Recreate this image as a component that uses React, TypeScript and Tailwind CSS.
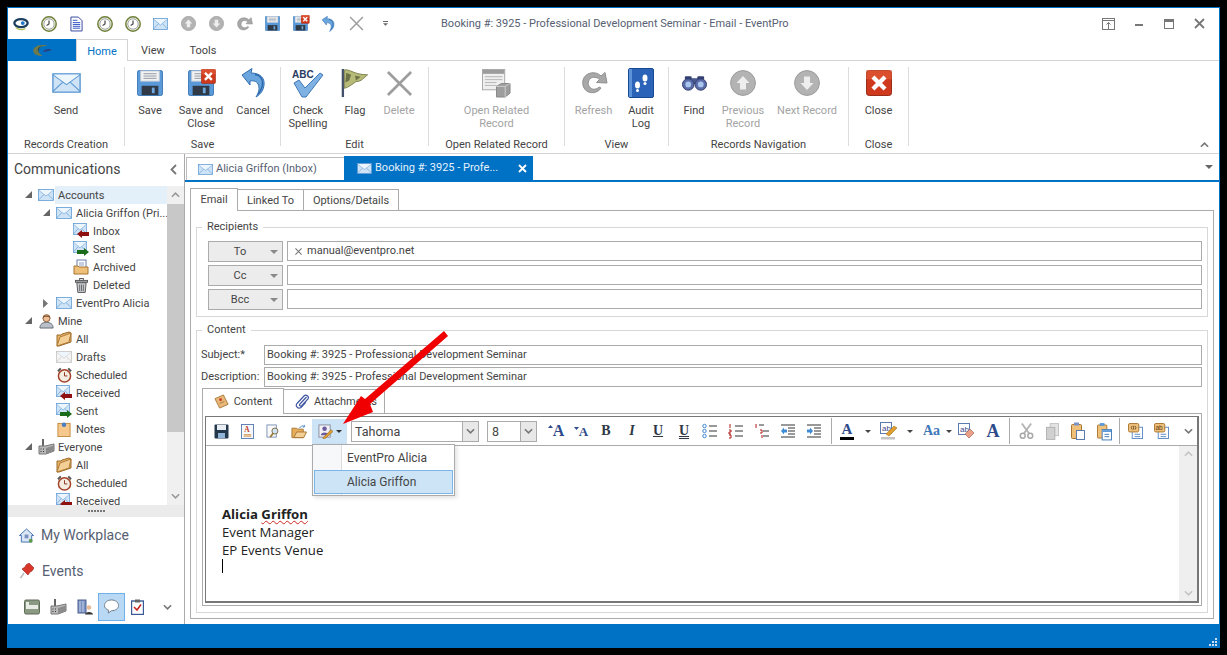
import React from 'react';

type IconProps = { className?: string };
type ColorProps = IconProps & { c?: string };

const Env = ({ className = 'w-[16px] h-[12px]', c = '#5f9bd4', f = '#cfe3f7' }: ColorProps & { f?: string }) => (
  <svg viewBox="0 0 32 24" className={`shrink-0 ${className}`} preserveAspectRatio="none">
    <rect x="1" y="1" width="30" height="22" fill={f} stroke={c} strokeWidth="1.6" />
    <path d="M1 2 L16 14 L31 2 M1 22 L12 11 M31 22 L20 11" fill="none" stroke={c} strokeWidth="1.3" />
    <path d="M2 2 L16 13 L30 2 Z" fill="#eef6fd" />
  </svg>
);

const ClockRing = () => (
  <svg viewBox="0 0 16 16" className="w-[16px] h-[16px]">
    <circle cx="8" cy="8" r="7.2" fill="#f6f6ea" stroke="#6f7f3a" strokeWidth="1.5" />
    <circle cx="8" cy="8" r="5.2" fill="#fff" stroke="#9aa3a0" strokeWidth="1" />
    <path d="M8 4.5 V8 L5.6 9.4" fill="none" stroke="#444" strokeWidth="1.2" />
  </svg>
);

const DocLines = () => (
  <svg viewBox="0 0 14 16" className="w-[13px] h-[16px]">
    <path d="M1 .5 H9 L13 4.5 V15.5 H1 Z" fill="#fff" stroke="#2a3f9a" />
    <path d="M3 4 H8 M3 6.5 H11 M3 8.5 H11 M3 10.5 H11 M3 12.5 H11" stroke="#2a4bc0" />
  </svg>
);

const Floppy = ({ className = 'w-[26px] h-[26px]' }: IconProps) => (
  <svg viewBox="0 0 28 28" className={className}>
    <rect x=".5" y=".5" width="27" height="27" rx="2" fill="#5b9ad8" stroke="#3a76b6" />
    <rect x="4" y="1" width="20" height="11" fill="#f2f2f2" stroke="#c4ccd6" />
    <path d="M7 4 H21 M7 6.5 H21 M7 9 H21" stroke="#8c96a3" />
    <rect x="5" y="17" width="18" height="10" fill="#2f3a46" />
    <rect x="16" y="19" width="3" height="6" fill="#6fa7df" />
  </svg>
);

const RedX = ({ className = 'w-[26px] h-[26px]' }: IconProps) => (
  <svg viewBox="0 0 28 28" className={className}>
    <rect x=".5" y=".5" width="27" height="27" rx="3" fill="#cf3a1e" stroke="#8f1f0d" />
    <path d="M0 0 H28 V10 H0 Z" fill="#e8643f" opacity=".5" />
    <path d="M7.5 7.5 L20.5 20.5 M20.5 7.5 L7.5 20.5" stroke="#fff" strokeWidth="4.6" />
  </svg>
);

const FloppyX = ({ className = 'w-[26px] h-[26px]' }: IconProps) => (
  <span className={`relative inline-block ${className}`}>
    <Floppy className="w-full h-full" />
    <span className="absolute -top-[1px] -right-[2px] w-[57%] h-[57%]">
      <RedX className="w-full h-full" />
    </span>
  </span>
);

const UndoArrow = ({ className = 'w-[24px] h-[30px]' }: IconProps) => (
  <svg viewBox="0 0 24 30" className={className}>
    <path d="M1 7 L11 .5 L10 5 C19 5 24 10 23 17 C22.5 22 20 26 15 29 C18 24 19 20 17 16 C15.5 13 12 12.5 9 13 L9 17 Z" fill="#6aa5dd" stroke="#2f6db0" />
    <path d="M14 6.5 C19 7 22 11 21.5 16 C21 20 19 24 17 26" fill="none" stroke="#2a66ab" strokeWidth="1.4" />
  </svg>
);

const GrayX = ({ className = 'w-[27px] h-[27px]' }: IconProps) => (
  <svg viewBox="0 0 28 28" className={className}>
    <path d="M2 2 L26 26 M26 2 L2 26" stroke="#9d9d9d" strokeWidth="2.8" />
  </svg>
);

const CircArrow = ({ className = 'w-[26px] h-[26px]', down = false }: IconProps & { down?: boolean }) => (
  <svg viewBox="0 0 26 26" className={className}>
    <circle cx="13" cy="13" r="12.4" fill="#b3b3b3" stroke="#9a9a9a" />
    <path d={down ? 'M13 20 L6.5 13 H10 V6.5 H16 V13 H19.5 Z' : 'M13 6 L19.5 13 H16 V19.5 H10 V13 H6.5 Z'} fill="#eeeeee" />
  </svg>
);

const RefreshGray = ({ className = 'w-[28px] h-[26px]' }: IconProps) => (
  <svg viewBox="0 0 28 26" className={className}>
    <path d="M21 18 C18 23 10 24.5 5.5 20 C1 15 2 7 8 4 C13 1.5 18 3 21 6 L25 2.5 L27 13 L16.5 12.5 L19.5 9.5 C17 7 13 6.5 10.5 8.5 C7.5 11 7.5 15.5 10.5 18 C13 20 17 19.5 19 17 Z" fill="#a8a8a8" stroke="#8f8f8f" />
  </svg>
);

const FlagIcon = () => (
  <svg viewBox="0 0 28 32" className="w-[28px] h-[31px]">
    <path d="M1.5 1 V30" stroke="#43506b" strokeWidth="2.4" />
    <path d="M3 2 C9 1 13 7 27 7 C23 10 21 14 15 14 C11 17 7 20 3 21 Z" fill="#b7bb78" stroke="#7f8352" />
    <path d="M5 5 L10 7 L8 13 L4 15 Z M14 8 L20 9 L15 13 Z" fill="#6c7046" />
  </svg>
);

const CheckAbc = () => (
  <svg viewBox="0 0 32 30" className="w-[32px] h-[30px]">
    <text x="0" y="9.5" fontSize="10" fontWeight="700" fontFamily="'Liberation Sans', sans-serif" fill="#2a3a60">ABC</text>
    <path d="M2 15 L7 12 L13 20 L28 5 L31 7 L14 29 L10 29 Z" fill="#7fb1e2" stroke="#3f78b8" />
  </svg>
);

const RelatedIcon = () => (
  <svg viewBox="0 0 30 30" className="w-[29px] h-[29px]">
    <rect x=".5" y=".5" width="23" height="21" fill="#efefef" stroke="#a8a8a8" />
    <rect x="1" y="1" width="22" height="4" fill="#9c9c9c" />
    <path d="M3 8 H21 M3 11 H21 M3 14 H15 M3 17 H15" stroke="#b4b4b4" />
    <path d="M15 18 L20 15 H29 V25 L24 29 H15 Z" fill="#9e9e9e" stroke="#888" />
    <path d="M15 18 H24 V29 M24 18 L29 15" fill="none" stroke="#cfcfcf" />
  </svg>
);

const AuditBook = () => (
  <svg viewBox="0 0 26 30" className="w-[26px] h-[30px]">
    <rect x=".5" y=".5" width="25" height="29" rx="1.5" fill="#2a63b8" stroke="#174a92" />
    <rect x="1" y="1" width="3" height="28" fill="#5d93d8" />
    <ellipse cx="9.5" cy="17" rx="2.5" ry="3.6" fill="#fff" />
    <circle cx="9.5" cy="22.5" r="1.5" fill="#fff" />
    <ellipse cx="17" cy="10" rx="2.5" ry="3.6" fill="#fff" />
    <circle cx="17" cy="15.5" r="1.5" fill="#fff" />
  </svg>
);

const Binoc = () => (
  <svg viewBox="0 0 26 16" className="w-[25px] h-[16px]">
    <rect x="8" y="3" width="10" height="6" fill="#4a5a8e" />
    <circle cx="6.5" cy="9.5" r="6" fill="#5c6ca8" stroke="#333f70" />
    <circle cx="19.5" cy="9.5" r="6" fill="#5c6ca8" stroke="#333f70" />
    <circle cx="6.5" cy="9.5" r="3" fill="#a8c6ee" />
    <circle cx="19.5" cy="9.5" r="3" fill="#a8c6ee" />
    <rect x="3" y="1" width="7" height="3" rx="1" fill="#333f70" />
    <rect x="16" y="1" width="7" height="3" rx="1" fill="#333f70" />
  </svg>
);

const EnvArrow = ({ green = false }: { green?: boolean }) => (
  <span className="relative inline-block w-[16px] h-[16px]">
    <Env className="w-[14px] h-[12px] absolute left-0 top-0" />
    <svg viewBox="0 0 12 8" className="w-[12px] h-[8px] absolute left-[4px] top-[7px]">
      <path
        d={green ? 'M0 2 H7 V0 L12 4 L7 8 V6 H0 Z' : 'M12 2 H5 V0 L0 4 L5 8 V6 H12 Z'}
        fill={green ? '#1a6b1a' : '#8e1010'}
      />
    </svg>
  </span>
);

const FolderIcon = () => (
  <svg viewBox="0 0 16 16" className="w-[16px] h-[16px]">
    <path d="M1 15 L1 4 H5 L6 3 L13 1 L15 2 V11 L3 15 Z" fill="#e6b266" stroke="#9a6a2a" />
    <path d="M1 15 L4 6 L15 2 L13 11 Z" fill="#f3cf95" stroke="#b07c36" />
  </svg>
);

const ArchiveIcon = () => (
  <svg viewBox="0 0 16 16" className="w-[16px] h-[16px]">
    <rect x="4" y="1" width="9" height="9" fill="#fff" stroke="#6a7fb0" />
    <path d="M6 4 H11 M6 6 H11" stroke="#8aa0c8" />
    <path d="M1 15 V7 H5 L6 8 H15 V15 Z" fill="#eec07a" stroke="#a57632" />
  </svg>
);

const TrashIcon = () => (
  <svg viewBox="0 0 14 16" className="w-[13px] h-[15px]">
    <rect x="5" y=".5" width="4" height="2" fill="none" stroke="#555" />
    <rect x=".5" y="2.5" width="13" height="2" fill="#a9afb8" stroke="#555" />
    <path d="M2 5 H12 L11 15.5 H3 Z" fill="#c6cbd2" stroke="#555" />
    <path d="M5 7 V14 M7 7 V14 M9 7 V14" stroke="#666" />
  </svg>
);

const PersonIcon = () => (
  <svg viewBox="0 0 16 16" className="w-[15px] h-[16px]">
    <path d="M1 15.5 C1 11 4 9.5 8 9.5 C12 9.5 15 11 15 15.5 Z" fill="#b9c0ca" stroke="#5e6670" />
    <circle cx="8" cy="5" r="3.8" fill="#eec19a" stroke="#8a5a32" />
    <path d="M4.2 5 C4 1 12 1 11.8 5 C10 3 6 3 4.2 5 Z" fill="#7a4a22" />
  </svg>
);

const FactoryIcon = ({ className = 'w-[17px] h-[16px]' }: IconProps) => (
  <svg viewBox="0 0 17 16" className={className}>
    <rect x="4" y="0" width="2" height="7" fill="#666" />
    <path d="M1 7 H7 L16 5 V12 L8 15 H1 Z" fill="#b9b9b9" stroke="#777" />
    <path d="M8 9 L16 6.5 V12 L8 15 Z" fill="#8b8b8b" />
    <path d="M2.5 10 H3.5 M5 10 H6 M2.5 12.5 H3.5 M5 12.5 H6" stroke="#333" />
  </svg>
);

const AlarmIcon = () => (
  <svg viewBox="0 0 16 16" className="w-[15px] h-[16px]">
    <path d="M1 4 L4 1 M15 4 L12 1" stroke="#555" strokeWidth="2" />
    <circle cx="8" cy="9" r="6.5" fill="#f4ece0" stroke="#a4422a" strokeWidth="1.6" />
    <path d="M8 5 V9 H11" fill="none" stroke="#8a2f1c" />
  </svg>
);

const NoteIcon = () => (
  <svg viewBox="0 0 14 16" className="w-[14px] h-[15px]">
    <rect x=".5" y="1.5" width="13" height="14" fill="#f6c88b" stroke="#c18a42" />
    <circle cx="7" cy="3" r="2.4" fill="#4b7fc4" />
  </svg>
);

type TreeRowProps = {
  level: number;
  icon: React.ReactNode;
  label: string;
  caret?: 'open' | 'closed';
  active?: boolean;
};

const TreeRow = ({ level, icon, label, caret, active }: TreeRowProps) => {
  const padding = level === 0 ? 'pl-[29px]' : level === 1 ? 'pl-[47px]' : 'pl-[64px]';
  return (
    <div className={`flex items-center h-[18px] shrink-0 ${padding}`}>
      <span className="w-[18px] h-[18px] relative shrink-0 flex items-center justify-center">
        <span className="absolute left-[-12px] top-[5px]">
          {caret === 'open' && (
            <svg viewBox="0 0 7 7" className="w-[7px] h-[7px]"><path d="M7 0 V7 H0 Z" fill="#666" /></svg>
          )}
          {caret === 'closed' && (
            <svg viewBox="0 0 5 9" className="w-[5px] h-[9px]"><path d="M0 0 L5 4.5 L0 9 Z" fill="#777" /></svg>
          )}
        </span>
        {icon}
      </span>
      <span className={`pl-[3px] h-[18px] leading-[20px] flex-1 whitespace-nowrap overflow-hidden text-[#444] ${active ? 'bg-[#e3eff9]' : ''}`}>
        {label}
      </span>
    </div>
  );
};

type RibbonBtnProps = { width: string; icon: React.ReactNode; lines: string[]; off?: boolean };

const RibbonBtn = ({ width, icon, lines, off }: RibbonBtnProps) => (
  <div className={`flex flex-col items-center shrink-0 ${width}`}>
    <div className="h-[32px] flex items-center justify-center">{icon}</div>
    <div className={`mt-[5px] text-center leading-[13px] whitespace-nowrap ${off ? 'text-[#a3a3a3]' : 'text-[#444]'}`}>
      {lines.map((l) => (
        <div key={l}>{l}</div>
      ))}
    </div>
  </div>
);

type RibbonGroupProps = { width: string; pad?: string; label: string; children: React.ReactNode };

const RibbonGroup = ({ width, pad = 'justify-center', label, children }: RibbonGroupProps) => (
  <div className={`shrink-0 flex flex-col h-[79px] mt-[6px] border-r border-[#dcdcdc] ${width}`}>
    <div className={`flex flex-1 ${pad}`}>{children}</div>
    <div className="h-[13px] leading-[13px] mb-[-5px] text-center text-[#444] whitespace-nowrap">{label}</div>
  </div>
);

const RecipientRow = ({ label, value }: { label: string; value?: string }) => (
  <div className="flex h-[21px] gap-[4px]">
    <div className="w-[75px] h-[21px] border border-[#ababab] bg-[#ececec] flex items-center relative text-[#444]">
      <span className="w-[62px] text-center pt-[2px]">{label}</span>
      <svg viewBox="0 0 8 4" className="w-[8px] h-[4px] absolute right-[4px] top-[8px]"><path d="M0 0 H8 L4 4 Z" fill="#8a8a8a" /></svg>
    </div>
    <div className="flex-1 h-[20px] border border-[#ababab] bg-white flex items-center pl-[7px] text-[#444]">
      {value && (
        <>
          <svg viewBox="0 0 8 8" className="w-[7px] h-[7px] mr-[5px]"><path d="M.5 .5 L7.5 7.5 M7.5 .5 L.5 7.5" stroke="#777" strokeWidth="1.2" /></svg>
          <span className="pt-[1px]">{value}</span>
        </>
      )}
    </div>
  </div>
);

const FieldRow = ({ label, value }: { label: string; value: string }) => (
  <div className="flex items-center h-[20px]">
    <span className="w-[63px] text-[#444] shrink-0 whitespace-nowrap">{label}</span>
    <div className="flex-1 h-[20px] border border-[#ababab] leading-[18px] pl-[2px] text-[#444] whitespace-nowrap">{value}</div>
  </div>
);

const Tool = ({ w = 'w-[26px]', children }: { w?: string; children: React.ReactNode }) => (
  <div className={`${w} h-[24px] flex items-center justify-center shrink-0`}>{children}</div>
);

const Caret = ({ w = 'w-[16px]' }: { w?: string }) => (
  <Tool w={w}>
    <svg viewBox="0 0 6 3" className="w-[6px] h-[3px]"><path d="M0 0 H6 L3 3 Z" fill="#444" /></svg>
  </Tool>
);

const Sep = () => <div className="w-[1px] h-[26px] bg-[#ababab] shrink-0" />;

const Serif = ({ children, className = '' }: { children: React.ReactNode; className?: string }) => (
  <span className={`font-['Liberation_Serif',serif] font-bold leading-none ${className}`}>{children}</span>
);

const GrowA = ({ small = false }: { small?: boolean }) => (
  <span className="flex items-start">
    <svg viewBox="0 0 5 3" className={`w-[5px] h-[3px] mt-[2px] ${small ? 'rotate-180' : ''}`}><path d="M0 3 L2.5 0 L5 3 Z" fill="#2e4a8a" /></svg>
    <Serif className={`${small ? 'text-[13px]' : 'text-[16px]'} text-[#2e4a8a]`}>A</Serif>
  </span>
);

const ListIcon = ({ color, kind }: { color: string; kind: 'dot' | 'num' | 'multi' }) => (
  <svg viewBox="0 0 16 16" className="w-[16px] h-[16px]">
    {kind === 'dot' && (
      <>
        <circle cx="2.5" cy="3" r="1.7" fill="none" stroke={color} />
        <circle cx="2.5" cy="8" r="1.7" fill="none" stroke={color} />
        <circle cx="2.5" cy="13" r="1.7" fill="none" stroke={color} />
      </>
    )}
    {kind === 'num' && <path d="M2 1 V5 M1 7 H3 V9 H1 V11 H3 M1 12 H3 V15 H1" fill="none" stroke={color} />}
    {kind === 'multi' && <path d="M2 1 V5 M6 7 H8 V10 H6 M8 12 V15" fill="none" stroke={color} />}
    <path
      d={kind === 'multi' ? 'M5 2 H10 M9 8 H15 M9 13 H15' : 'M7 3 H15 M7 8 H15 M7 13 H15'}
      stroke="#333"
    />
  </svg>
);

const IndentIcon = ({ right = false }: { right?: boolean }) => (
  <svg viewBox="0 0 16 14" className="w-[16px] h-[14px]">
    <path d="M1 1 H15 M8 4 H15 M8 7 H15 M8 10 H15 M1 13 H15" stroke="#333" />
    <path d={right ? 'M1 5.5 H4 V3.5 L7 7 L4 10.5 V8.5 H1 Z' : 'M7 5.5 H4 V3.5 L1 7 L4 10.5 V8.5 H7 Z'} fill="#3f8ad6" />
  </svg>
);

const ScrollArrow = ({ down = false, c = '#999' }: { down?: boolean; c?: string }) => (
  <svg viewBox="0 0 10 6" className="w-[9px] h-[6px]">
    <path d={down ? 'M1 1 L5 5 L9 1' : 'M1 5 L5 1 L9 5'} fill="none" stroke={c} strokeWidth="1.8" />
  </svg>
);

export default function App() {
  return (
    <div className="w-[1227px] h-[655px] bg-black pt-[7px] pl-[7px] font-['Roboto',sans-serif] text-[11px] relative overflow-hidden">
      <div className="w-[1213px] h-[641px] bg-white border-t border-x border-[#0072c6] flex flex-col">
        {/* title bar */}
        <div className="h-[31px] flex items-center shrink-0">
          <div className="flex items-center w-[392px] shrink-0">
            <div className="w-[27px] flex justify-center">
              <svg viewBox="0 0 18 14" className="w-[16px] h-[14px]">
                <ellipse cx="9" cy="6" rx="7.5" ry="4.5" fill="none" stroke="#1c3f5f" strokeWidth="2.6" />
                <circle cx="11" cy="6" r="2.2" fill="#1f78c8" />
                <path d="M3 11 C6 14 11 14 14 12" fill="none" stroke="#b3bd56" strokeWidth="1.4" />
              </svg>
            </div>
            <div className="w-[28px] flex justify-center"><ClockRing /></div>
            <div className="w-[28px] flex justify-center"><DocLines /></div>
            <div className="w-[28px] flex justify-center"><ClockRing /></div>
            <div className="w-[28px] flex justify-center"><ClockRing /></div>
            <div className="w-[28px] flex justify-center"><Env className="w-[15px] h-[12px]" /></div>
            <div className="w-[28px] flex justify-center"><CircArrow className="w-[15px] h-[15px]" /></div>
            <div className="w-[28px] flex justify-center"><CircArrow className="w-[15px] h-[15px]" down /></div>
            <div className="w-[28px] flex justify-center"><RefreshGray className="w-[17px] h-[16px]" /></div>
            <div className="w-[28px] flex justify-center"><Floppy className="w-[15px] h-[15px]" /></div>
            <div className="w-[28px] flex justify-center"><FloppyX className="w-[15px] h-[15px]" /></div>
            <div className="w-[28px] flex justify-center"><UndoArrow className="w-[14px] h-[16px]" /></div>
            <div className="w-[28px] flex justify-center"><GrayX className="w-[15px] h-[15px]" /></div>
            <div className="w-[28px] flex flex-col items-center ml-[2px]">
              <div className="w-[5px] h-[1px] bg-[#666] mb-[1px]" />
              <svg viewBox="0 0 6 3" className="w-[5px] h-[3px]"><path d="M0 0 H6 L3 3 Z" fill="#666" /></svg>
            </div>
          </div>
          <div className="ml-[41px] flex-1 pt-[2px] text-[#566072] whitespace-nowrap">Booking #: 3925 - Professional Development Seminar - Email - EventPro</div>
          <div className="flex items-center pr-[5px]">
            <div className="w-[30px] flex justify-center">
              <svg viewBox="0 0 13 12" className="w-[13px] h-[12px]">
                <rect x=".5" y=".5" width="12" height="11" fill="none" stroke="#777" />
                <path d="M0 2.5 H13 M6.5 11 V4.5 M4.5 6.5 L6.5 4.5 L8.5 6.5" fill="none" stroke="#777" />
              </svg>
            </div>
            <div className="w-[31px] flex justify-center pt-[2px]"><div className="w-[8px] h-[2px] bg-[#777]" /></div>
            <div className="w-[30px] flex justify-center">
              <div className="w-[10px] h-[10px] border border-[#777] border-t-[3px]" />
            </div>
            <div className="w-[30px] flex justify-center">
              <svg viewBox="0 0 11 11" className="w-[11px] h-[11px]"><path d="M1 1 L10 10 M10 1 L1 10" stroke="#777" strokeWidth="1.8" /></svg>
            </div>
          </div>
        </div>

        {/* ribbon tabs */}
        <div className="h-[22px] flex shrink-0 border-b border-[#d4d4d4] text-[#444]">
          <div className="w-[68px] h-[22px] bg-[#0072c6] flex items-center justify-center">
            <svg viewBox="0 0 22 14" className="w-[21px] h-[13px]">
              <path d="M11 1 C5 1 1 4 1 7 C1 11 6 13 11 13 C8 11 6 9 7 6 C8 3 12 2 17 2 C15 1 13 1 11 1 Z" fill="#6f7a4a" />
              <path d="M11 8 C14 9 18 8 21 6 C20 5 17 5 14 6 Z" fill="#2b3f7f" />
              <path d="M11 2 C8 3 6 6 7 9 C5 7 6 3 11 2 Z" fill="#1c2f4a" />
            </svg>
          </div>
          <div className="w-[52px] h-[22px] bg-white border-x border-t border-[#d4d4d4] text-[#0072c6] text-center leading-[23px]">Home</div>
          <div className="w-[50px] text-center leading-[24px]">View</div>
          <div className="w-[50px] text-center leading-[24px]">Tools</div>
        </div>

        {/* ribbon */}
        <div className="h-[93px] flex shrink-0 border-b border-[#d4d4d4] relative">
          <RibbonGroup width="w-[117px]" label="Records Creation">
            <RibbonBtn width="w-[60px]" icon={<Env className="w-[29px] h-[20px]" />} lines={['Send']} />
          </RibbonGroup>
          <RibbonGroup width="w-[156px]" pad="pl-[5px]" label="Save">
            <RibbonBtn width="w-[40px]" icon={<Floppy />} lines={['Save']} />
            <RibbonBtn width="w-[62px]" icon={<FloppyX />} lines={['Save and', 'Close']} />
            <RibbonBtn width="w-[42px]" icon={<UndoArrow />} lines={['Cancel']} />
          </RibbonGroup>
          <RibbonGroup width="w-[148px]" pad="pl-[3px]" label="Edit">
            <RibbonBtn width="w-[48px]" icon={<CheckAbc />} lines={['Check', 'Spelling']} />
            <RibbonBtn width="w-[46px]" icon={<FlagIcon />} lines={['Flag']} />
            <RibbonBtn width="w-[42px]" icon={<GrayX />} lines={['Delete']} off />
          </RibbonGroup>
          <RibbonGroup width="w-[136px]" label="Open Related Record">
            <RibbonBtn width="w-[90px]" icon={<RelatedIcon />} lines={['Open Related', 'Record']} off />
          </RibbonGroup>
          <RibbonGroup width="w-[104px]" pad="pl-[8px]" label="View">
            <RibbonBtn width="w-[41px]" icon={<RefreshGray />} lines={['Refresh']} off />
            <RibbonBtn width="w-[54px]" icon={<AuditBook />} lines={['Audit', 'Log']} />
          </RibbonGroup>
          <RibbonGroup width="w-[180px]" pad="pl-[7px]" label="Records Navigation">
            <RibbonBtn width="w-[36px]" icon={<Binoc />} lines={['Find']} />
            <RibbonBtn width="w-[62px]" icon={<CircArrow />} lines={['Previous', 'Record']} off />
            <RibbonBtn width="w-[66px]" icon={<CircArrow down />} lines={['Next Record']} off />
          </RibbonGroup>
          <RibbonGroup width="w-[60px]" label="Close">
            <RibbonBtn width="w-[50px]" icon={<RedX />} lines={['Close']} />
          </RibbonGroup>
          <div className="absolute right-[10px] bottom-[5px]"><ScrollArrow c="#777" /></div>
        </div>

        {/* body */}
        <div className="flex flex-1 min-h-0">
          {/* sidebar */}
          <div className="w-[177px] shrink-0 border-r border-[#ababab] flex flex-col">
            <div className="h-[32px] shrink-0 flex items-center justify-between pl-[6px] pr-[7px] pb-[2px]">
              <span className="text-[14px] text-[#444]">Communications</span>
              <svg viewBox="0 0 7 11" className="w-[7px] h-[11px]"><path d="M6 1 L1.5 5.5 L6 10" fill="none" stroke="#777" strokeWidth="1.8" /></svg>
            </div>
            <div className="h-[319px] flex shrink-0 overflow-hidden">
              <div className="w-[159px] flex flex-col overflow-hidden">
                <TreeRow level={0} caret="open" icon={<Env />} label="Accounts" active />
                <TreeRow level={1} caret="open" icon={<Env />} label="Alicia Griffon (Pri..." />
                <TreeRow level={2} icon={<EnvArrow />} label="Inbox" />
                <TreeRow level={2} icon={<EnvArrow green />} label="Sent" />
                <TreeRow level={2} icon={<ArchiveIcon />} label="Archived" />
                <TreeRow level={2} icon={<TrashIcon />} label="Deleted" />
                <TreeRow level={1} caret="closed" icon={<Env />} label="EventPro Alicia" />
                <TreeRow level={0} caret="open" icon={<PersonIcon />} label="Mine" />
                <TreeRow level={1} icon={<FolderIcon />} label="All" />
                <TreeRow level={1} icon={<Env c="#c4c4c4" f="#f4f4f4" />} label="Drafts" />
                <TreeRow level={1} icon={<AlarmIcon />} label="Scheduled" />
                <TreeRow level={1} icon={<EnvArrow />} label="Received" />
                <TreeRow level={1} icon={<EnvArrow green />} label="Sent" />
                <TreeRow level={1} icon={<NoteIcon />} label="Notes" />
                <TreeRow level={0} caret="open" icon={<FactoryIcon />} label="Everyone" />
                <TreeRow level={1} icon={<FolderIcon />} label="All" />
                <TreeRow level={1} icon={<AlarmIcon />} label="Scheduled" />
                <TreeRow level={1} icon={<EnvArrow />} label="Received" />
              </div>
              <div className="w-[17px] bg-[#f0f0f0] flex flex-col">
                <div className="h-[18px] flex items-center justify-center shrink-0"><ScrollArrow /></div>
                <div className="h-[228px] bg-[#c8c8c8] shrink-0" />
                <div className="flex-1" />
                <div className="h-[18px] flex items-center justify-center shrink-0"><ScrollArrow down /></div>
              </div>
            </div>
            <div className="h-[12px] shrink-0 bg-[#ebebeb] flex items-center justify-center gap-[1px]">
              {[0, 1, 2, 3, 4, 5].map((i) => (
                <div key={i} className="w-[2px] h-[2px] bg-[#777]" />
              ))}
            </div>
            <div className="h-[36px] shrink-0 flex items-center pl-[11px] gap-[7px] text-[14px] text-[#566072]">
              <svg viewBox="0 0 16 16" className="w-[15px] h-[15px]">
                <path d="M8 1 L15.5 8 H13.5 V15 H2.5 V8 H.5 Z" fill="#d9e6f6" stroke="#3f6cae" />
                <rect x="6" y="7" width="4" height="4" fill="#7a8ec0" />
                <circle cx="12.5" cy="13.5" r="2" fill="#5a9a4a" />
              </svg>
              My Workplace
            </div>
            <div className="h-[36px] shrink-0 flex items-center pl-[12px] gap-[8px] text-[14px] text-[#566072]">
              <svg viewBox="0 0 14 16" className="w-[14px] h-[16px]">
                <path d="M6 2 L9 0 L14 5 L12 8 L10 9 L8 12 L2 6 L5 4 Z" fill="#d8362a" stroke="#9c1e16" strokeWidth=".6" />
                <path d="M4 10 L.5 15" stroke="#b9b9b9" strokeWidth="1.5" />
              </svg>
              Events
            </div>
            <div className="flex items-center pl-[11px] h-[35px] shrink-0">
              <div className="w-[28px] flex justify-center">
                <svg viewBox="0 0 16 16" className="w-[16px] h-[16px]">
                  <rect x=".5" y="1" width="15" height="14" rx="1.5" fill="#8a9a82" stroke="#5e6b58" />
                  <rect x="2" y="6" width="12" height="4" fill="#e9ece6" />
                  <rect x="2" y="3" width="3" height="3" fill="#e9ece6" />
                </svg>
              </div>
              <div className="w-[28px] flex justify-center"><FactoryIcon /></div>
              <div className="w-[28px] flex justify-center">
                <svg viewBox="0 0 16 16" className="w-[16px] h-[16px]">
                  <rect x="1" y="1" width="8" height="13" fill="#7d93c4" stroke="#4d5f90" />
                  <path d="M3 2 V13 M6 2 V13" stroke="#c3cde6" />
                  <circle cx="12" cy="8.5" r="2.2" fill="#e6b894" />
                  <path d="M8 15.5 C8 12 16 12 16 15.5 Z" fill="#333" />
                </svg>
              </div>
              <div className="w-[28px] h-[28px] bg-[#b9d8f4] border border-[#6fb0ea] flex justify-center items-center">
                <svg viewBox="0 0 17 16" className="w-[17px] h-[15px]">
                  <path d="M8.5 1 C13 1 16 4 16 7 C16 10 13 12.5 8.5 12.5 L5 15 L5.5 12 C3 11 1 9.5 1 7 C1 4 4 1 8.5 1 Z" fill="#fff" stroke="#6d7886" />
                </svg>
              </div>
              <div className="w-[28px] flex justify-center">
                <svg viewBox="0 0 13 16" className="w-[13px] h-[16px]">
                  <rect x=".5" y="2" width="12" height="13.5" fill="#fff" stroke="#3a5a96" strokeWidth="1.4" />
                  <rect x="4" y=".5" width="5" height="3" fill="#666" />
                  <path d="M3 8 L6 11 L10 5.5" fill="none" stroke="#c8281e" strokeWidth="1.6" />
                </svg>
              </div>
              <div className="w-[35px] flex justify-center"><ScrollArrow down c="#777" /></div>
            </div>
          </div>

          {/* main */}
          <div className="flex-1 min-w-0 flex flex-col">
            <div className="h-[26px] shrink-0 flex items-end pl-[1px] relative">
              <div className="w-[158px] h-[23px] border-t border-l border-[#bdbdbd] flex items-center pl-[11px] gap-[3px] text-[#566072]">
                <Env className="w-[15px] h-[11px]" />
                Alicia Griffon (Inbox)
              </div>
              <div className="w-[189px] h-[24px] bg-[#0072c6] flex items-center pl-[13px] gap-[3px] text-[#e6f0fa] whitespace-nowrap">
                <Env className="w-[15px] h-[11px]" />
                Booking #: 3925 - Profe...
                <svg viewBox="0 0 9 9" className="w-[9px] h-[9px] ml-[17px] shrink-0"><path d="M1 1 L8 8 M8 1 L1 8" stroke="#fff" strokeWidth="1.8" /></svg>
              </div>
              <svg viewBox="0 0 8 4" className="w-[8px] h-[4px] absolute right-[6px] top-[11px]"><path d="M0 0 H8 L4 4 Z" fill="#666" /></svg>
            </div>
            <div className="h-[2px] bg-[#0072c6] shrink-0" />

            <div className="flex-1 min-h-0 pl-[5px] pr-[5px] pt-[5px] flex flex-col">
              <div className="flex items-end h-[23px] shrink-0 text-[#444]">
                <div className="w-[48px] h-[23px] border-x border-t border-[#ababab] bg-white text-center leading-[21px] relative top-[1px] z-10">Email</div>
                <div className="w-[66px] h-[21px] border-t border-r border-[#ababab] text-center leading-[21px]">Linked To</div>
                <div className="w-[95px] h-[21px] border-t border-r border-[#ababab] text-center leading-[21px]">Options/Details</div>
              </div>
              <div className="border border-[#ababab] h-[409px] shrink-0 px-[5px] pt-[8px] text-[#444]">
                <fieldset className="border border-[#d8d8d8] h-[98px] pl-[11px] pr-[5px] min-w-0">
                  <legend className="ml-[-6px] px-[5px] leading-[16px]">Recipients</legend>
                  <div className="pt-[6px] flex flex-col gap-[3px]">
                    <RecipientRow label="To" value="manual@eventpro.net" />
                    <RecipientRow label="Cc" />
                    <RecipientRow label="Bcc" />
                  </div>
                </fieldset>
                <fieldset className="mt-[6px] border border-[#d8d8d8] h-[290px] pl-[4px] pr-[5px] min-w-0">
                  <legend className="ml-[1px] px-[5px] leading-[14px]">Content</legend>
                  <div className="pt-[8px] flex flex-col gap-[2px]">
                    <FieldRow label="Subject:*" value="Booking #: 3925 - Professional Development Seminar" />
                    <FieldRow label="Description:" value="Booking #: 3925 - Professional Development Seminar" />
                  </div>
                  <div className="flex items-end h-[26px] pl-[1px]">
                    <div className="w-[82px] h-[26px] border-x border-t border-[#ababab] bg-white flex items-center justify-center gap-[5px] relative top-[1px] z-10">
                      <svg viewBox="0 0 16 16" className="w-[15px] h-[15px]">
                        <path d="M1 5 L10 1 L15 11 L6 15 Z" fill="#e8b878" stroke="#a87a3c" />
                        <circle cx="7" cy="6" r="1.5" fill="#c8382a" />
                        <path d="M6 10 L11 8" stroke="#a87a3c" />
                      </svg>
                      <span className="pt-[1px]">Content</span>
                    </div>
                    <div className="w-[101px] h-[24px] border-t border-r border-[#ababab] flex items-center pl-[11px] gap-[5px] whitespace-nowrap">
                      <svg viewBox="0 0 14 15" className="w-[14px] h-[15px]">
                        <path d="M11.5 3 L5 10 C3.5 11.5 5.5 13 7 11.5 L13 5 C14.5 2.5 11 0 9 2 L2 9.5 C0 12 3 15.5 6 13.5 L11 8" fill="none" stroke="#3f56a0" strokeWidth="1.2" />
                      </svg>
                      <span className="pt-[1px]">Attachments</span>
                    </div>
                  </div>
                  <div className="border border-[#ababab] h-[193px] p-[2px] ml-[1px]">
                    <div className="h-full border-2 border-t border-l border-[#777] flex flex-col">
                      {/* editor toolbar */}
                      <div className="h-[29px] shrink-0 border-b border-[#ababab] flex items-center pl-[2px] overflow-hidden">
                        <Tool>
                          <svg viewBox="0 0 15 15" className="w-[15px] h-[15px]">
                            <rect x=".5" y=".5" width="14" height="14" rx="1" fill="#24384c" />
                            <rect x="3" y="1" width="9" height="5" fill="#e8eef4" />
                            <rect x="4" y="9" width="7" height="5" fill="#8fb4d8" />
                          </svg>
                        </Tool>
                        <Tool>
                          <svg viewBox="0 0 14 16" className="w-[13px] h-[15px]">
                            <rect x=".5" y=".5" width="13" height="15" fill="#f4f7fc" stroke="#5a7ab0" />
                            <text x="3.5" y="9" fontSize="8" fontWeight="700" fill="#c23a1c" fontFamily="'Liberation Serif', serif">A</text>
                            <path d="M3 11.5 H11 M3 13 H11" stroke="#d08a3a" />
                          </svg>
                        </Tool>
                        <Tool>
                          <svg viewBox="0 0 16 16" className="w-[15px] h-[15px]">
                            <rect x="1" y="1" width="10" height="13" fill="#fafafa" stroke="#7d92b8" />
                            <circle cx="9.5" cy="7.5" r="3.2" fill="#cfe3f7" stroke="#7a6a3a" />
                            <path d="M7.5 10 L4.5 14" stroke="#9a7a3a" strokeWidth="1.8" />
                          </svg>
                        </Tool>
                        <Tool>
                          <svg viewBox="0 0 17 15" className="w-[16px] h-[15px]">
                            <path d="M1 14 V4 H6 L7 5 H13 V14 Z" fill="#e6ad5c" stroke="#a87430" />
                            <path d="M3 14 L6 8 H16.5 L13.5 14 Z" fill="#f3cf95" stroke="#a87430" />
                            <path d="M9 4 C10 2 12 1 14 2 M14 .5 L14.5 2.5 L12.5 3" fill="none" stroke="#4a86c8" />
                          </svg>
                        </Tool>
                        <div className="w-[35px] h-[25px] bg-[#cde4f7] flex items-center justify-center gap-[3px] shrink-0">
                          <svg viewBox="0 0 16 16" className="w-[15px] h-[15px]">
                            <rect x="1" y="1" width="12" height="13" fill="#f2f2f4" stroke="#8a8aa0" />
                            <circle cx="7" cy="5" r="2.4" fill="#6a5aa0" />
                            <path d="M3 12 C3 8 11 8 11 12 Z" fill="#6a5aa0" />
                            <path d="M5 15 L14 6 L16 8 L7 16 Z" fill="#e0a030" stroke="#8a5a18" strokeWidth=".6" />
                          </svg>
                          <svg viewBox="0 0 6 3" className="w-[6px] h-[3px]"><path d="M0 0 H6 L3 3 Z" fill="#333" /></svg>
                        </div>
                        <div className="ml-[4px] w-[128px] h-[21px] border border-[#ababab] flex shrink-0">
                          <span className="flex-1 pl-[3px] leading-[19px] text-[12.5px] text-[#444]">Tahoma</span>
                          <span className="w-[16px] bg-[#e8e8e8] border-l border-[#ababab] flex items-center justify-center"><ScrollArrow down c="#777" /></span>
                        </div>
                        <div className="ml-[8px] w-[50px] h-[21px] border border-[#ababab] flex shrink-0">
                          <span className="flex-1 pl-[4px] leading-[19px] text-[12.5px] text-[#444]">8</span>
                          <span className="w-[16px] bg-[#e8e8e8] border-l border-[#ababab] flex items-center justify-center"><ScrollArrow down c="#777" /></span>
                        </div>
                        <div className="w-[6px] shrink-0" />
                        <Tool><GrowA /></Tool>
                        <Tool w="w-[24px]"><GrowA small /></Tool>
                        <Tool><Serif className="text-[14px] text-[#2e3846]">B</Serif></Tool>
                        <Tool><Serif className="text-[14px] text-[#2e3846] italic">I</Serif></Tool>
                        <Tool><Serif className="text-[14px] text-[#2e3846] underline">U</Serif></Tool>
                        <Tool><Serif className="text-[14px] text-[#2e3846] underline decoration-double">U</Serif></Tool>
                        <Tool><ListIcon color="#3f8ad6" kind="dot" /></Tool>
                        <Tool><ListIcon color="#b01818" kind="num" /></Tool>
                        <Tool><ListIcon color="#b01818" kind="multi" /></Tool>
                        <Tool><IndentIcon /></Tool>
                        <Tool><IndentIcon right /></Tool>
                        <div className="w-[4px] shrink-0" />
                        <Sep />
                        <div className="w-[2px] shrink-0" />
                        <Tool>
                          <div className="flex flex-col items-center">
                            <Serif className="text-[15px] text-[#2e4a8a]">A</Serif>
                            <div className="w-[14px] h-[3px] bg-black" />
                          </div>
                        </Tool>
                        <Caret />
                        <Tool>
                          <svg viewBox="0 0 18 18" className="w-[18px] h-[18px]">
                            <rect x=".5" y=".5" width="11" height="11" fill="#fff" stroke="#5a7ab0" />
                            <text x="2" y="9" fontSize="8" fill="#3a4a8a" fontFamily="'Liberation Sans', sans-serif">ab</text>
                            <path d="M6 12 L14 4 L17 6 L9 14 Z" fill="#e0a030" stroke="#a8701c" strokeWidth=".6" />
                            <rect x="1" y="15" width="14" height="2.5" fill="#c4c4c4" />
                          </svg>
                        </Tool>
                        <Caret />
                        <Tool w="w-[27px]"><Serif className="text-[14px] text-[#3f78b8] whitespace-nowrap">Aa</Serif></Tool>
                        <Caret w="w-[8px]" />
                        <Tool w="w-[27px]">
                          <svg viewBox="0 0 17 17" className="w-[17px] h-[17px]">
                            <rect x=".5" y=".5" width="11" height="11" fill="#fff" stroke="#5a7ab0" />
                            <text x="2" y="9" fontSize="8" fill="#3a4a8a" fontFamily="'Liberation Sans', sans-serif">ab</text>
                            <path d="M7 11 L12 6 L16 10 L11 15 Z" fill="#e8a088" stroke="#a8584a" strokeWidth=".6" />
                          </svg>
                        </Tool>
                        <Tool><Serif className="text-[18px] text-[#2e4a8a]">A</Serif></Tool>
                        <div className="w-[3px] shrink-0" />
                        <Sep />
                        <div className="w-[3px] shrink-0" />
                        <Tool>
                          <svg viewBox="0 0 16 18" className="w-[15px] h-[18px]">
                            <path d="M3 1 L11 12 M13 1 L5 12" stroke="#b4b4b4" strokeWidth="2" />
                            <circle cx="4" cy="14" r="2.6" fill="none" stroke="#a8a8a8" strokeWidth="1.6" />
                            <circle cx="12" cy="14" r="2.6" fill="none" stroke="#a8a8a8" strokeWidth="1.6" />
                          </svg>
                        </Tool>
                        <Tool>
                          <svg viewBox="0 0 14 18" className="w-[13px] h-[17px]">
                            <rect x="4.5" y=".5" width="9" height="13" fill="#e4e4e4" stroke="#c0c0c0" />
                            <rect x=".5" y="4.5" width="9" height="13" fill="#d0d0d0" stroke="#b0b0b0" />
                          </svg>
                        </Tool>
                        <Tool>
                          <svg viewBox="0 0 14 18" className="w-[14px] h-[18px]">
                            <rect x=".5" y="2.5" width="10" height="14" rx="1" fill="#eec07a" stroke="#a87430" />
                            <rect x="3" y=".5" width="5" height="3" fill="#7a93c8" />
                            <rect x="5.5" y="8.5" width="8" height="9" fill="#fff" stroke="#5a7ab0" />
                          </svg>
                        </Tool>
                        <Tool>
                          <svg viewBox="0 0 16 19" className="w-[15px] h-[19px]">
                            <rect x=".5" y="2.5" width="10" height="14" rx="1" fill="#eec07a" stroke="#a87430" />
                            <rect x="3" y=".5" width="5" height="3" fill="#5a9ad8" />
                            <rect x="5.5" y="7.5" width="10" height="11" fill="#fff" stroke="#3f78b8" />
                            <rect x="6" y="8" width="9" height="2" fill="#5a9ad8" />
                            <path d="M8 12.5 H13 M8 15 H13" stroke="#3f78b8" />
                          </svg>
                        </Tool>
                        <div className="w-[2px] shrink-0" />
                        <Sep />
                        <div className="w-[2px] shrink-0" />
                        <Tool>
                          <svg viewBox="0 0 16 17" className="w-[15px] h-[16px]">
                            <rect x="4.5" y="4.5" width="11" height="12" fill="#fff" stroke="#5a8ac8" />
                            <rect x=".5" y=".5" width="11" height="9" rx="1.5" fill="#eec07a" stroke="#a87430" />
                            <path d="M6 3 V7 M4.5 3 L3.5 5 L4.5 7 M7.5 3 L8.5 5 L7.5 7" fill="none" stroke="#5a3a10" strokeWidth=".8" />
                            <path d="M7 12 H13 M7 14.5 H13" stroke="#5a8ac8" />
                          </svg>
                        </Tool>
                        <Tool>
                          <svg viewBox="0 0 16 17" className="w-[15px] h-[16px]">
                            <rect x="4.5" y="4.5" width="11" height="12" fill="#fff" stroke="#5a8ac8" />
                            <rect x=".5" y=".5" width="11" height="9" rx="1.5" fill="#eec07a" stroke="#a87430" />
                            <text x="1.5" y="7.5" fontSize="7" fill="#5a3a10" fontFamily="'Liberation Sans', sans-serif">ab</text>
                            <path d="M7 12 H13 M7 14.5 H13" stroke="#5a8ac8" />
                          </svg>
                        </Tool>
                        <Tool w="w-[28px]"><ScrollArrow down c="#777" /></Tool>
                      </div>
                      {/* editor */}
                      <div className="flex-1 flex min-h-0">
                        <div className="flex-1 pl-[16px] pt-[59px] font-['Open_Sans',sans-serif] text-[13.2px] leading-[18px] text-[#222]">
                          <div className="font-bold">
                            Alicia <span className="underline decoration-wavy decoration-[#c8281e] decoration-1">Griffon</span>
                          </div>
                          <div>Event Manager</div>
                          <div>EP Events Venue</div>
                          <div className="w-[1px] h-[14px] bg-black" />
                        </div>
                        <div className="w-[18px] shrink-0 bg-[#efefef] flex flex-col justify-between py-[5px] items-center">
                          <ScrollArrow c="#c4c4c4" />
                          <ScrollArrow down c="#c4c4c4" />
                        </div>
                      </div>
                    </div>
                  </div>
                </fieldset>
              </div>
            </div>
          </div>
        </div>

        {/* status bar */}
        <div className="h-[24px] shrink-0 bg-[#0072c6] flex items-end justify-end pr-[2px] pb-[2px]">
          <div className="grid grid-cols-3 gap-[1px]">
            <span /><span /><span className="w-[2px] h-[2px] bg-[#cfe0f0]" />
            <span /><span className="w-[2px] h-[2px] bg-[#cfe0f0]" /><span className="w-[2px] h-[2px] bg-[#cfe0f0]" />
            <span className="w-[2px] h-[2px] bg-[#cfe0f0]" /><span className="w-[2px] h-[2px] bg-[#cfe0f0]" /><span className="w-[2px] h-[2px] bg-[#cfe0f0]" />
          </div>
        </div>
      </div>

      {/* signature dropdown */}
      <div className="absolute left-[312px] top-[444px] w-[143px] h-[52px] bg-white border border-[#ababab] shadow-[2px_2px_4px_rgba(0,0,0,0.12)] text-[12px] text-[#444] z-20">
        <div className="absolute left-0 top-0 bottom-0 w-[29px] bg-[#f7f8fa] border-r border-[#dcdcdc]" />
        <div className="relative h-[25px] pl-[34px] leading-[26px]">EventPro Alicia</div>
        <div className="relative h-[24px] ml-[1px] mr-[1px] bg-[#cde4f7] border border-[#7db5ea] pl-[32px] leading-[22px]">Alicia Griffon</div>
      </div>

      {/* red annotation arrow */}
      <svg viewBox="0 0 1227 655" className="absolute left-0 top-0 w-[1227px] h-[655px] pointer-events-none z-30">
        <polygon points="343,424 361,396 365,399 444,331 448,336 370,404 373,412" fill="#f00000" />
      </svg>
    </div>
  );
}
